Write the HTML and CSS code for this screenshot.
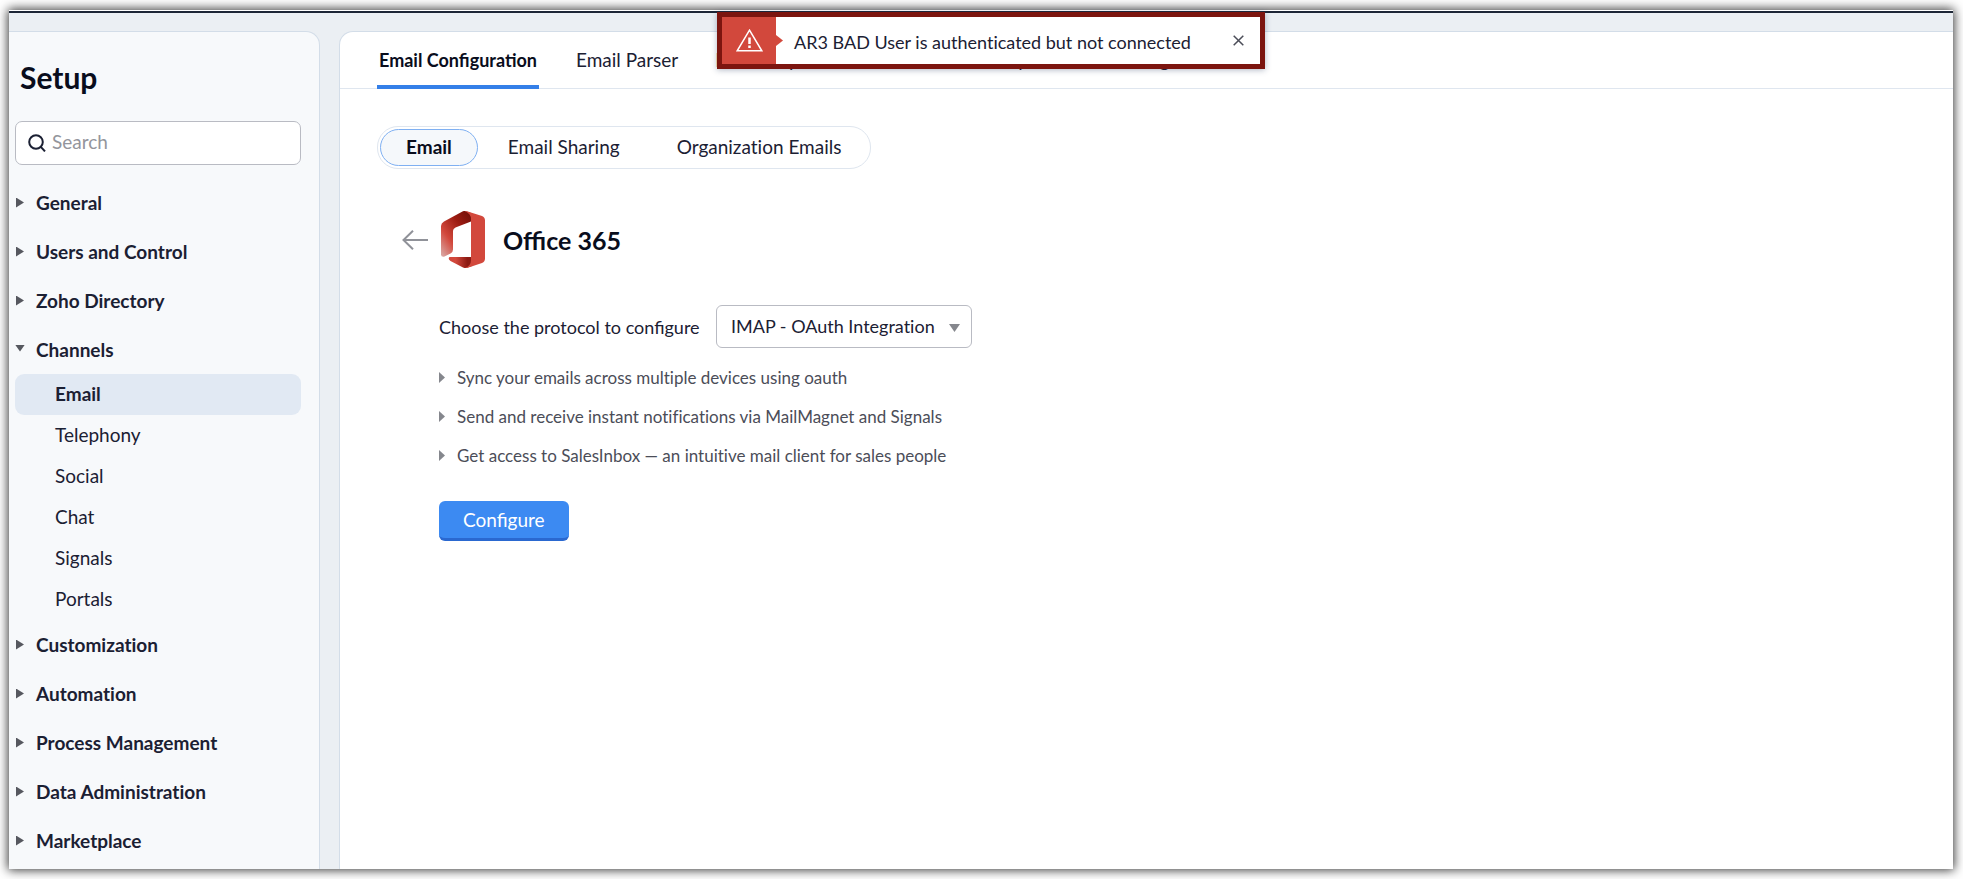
FILE: index.html
```html
<!DOCTYPE html>
<html lang="en">
<head>
<meta charset="utf-8">
<title>Setup - Email Configuration</title>
<link rel="stylesheet" href="styles.css">
</head>
<body>
<div class="window">
  <aside class="sidebar">
    <h1 class="sidebar-title">Setup</h1>
    <label class="search">
      <svg class="search-icon" viewBox="0 0 18 18" aria-hidden="true"><circle cx="8" cy="8" r="6.8"/><path d="M12.8 12.8L17 17.4"/></svg>
      <input class="search-input" type="search" placeholder="Search" aria-label="Search">
    </label>
    <nav class="menu" aria-label="Setup">
      <button class="group" type="button"><span class="caret"></span>General</button>
      <button class="group" type="button"><span class="caret"></span>Users and Control</button>
      <button class="group" type="button"><span class="caret"></span>Zoho Directory</button>
      <button class="group" type="button" aria-expanded="true"><span class="caret caret-open"></span>Channels</button>
      <div class="children">
        <a class="item item-active" href="#">Email</a>
        <a class="item" href="#">Telephony</a>
        <a class="item" href="#">Social</a>
        <a class="item" href="#">Chat</a>
        <a class="item" href="#">Signals</a>
        <a class="item" href="#">Portals</a>
      </div>
      <button class="group" type="button"><span class="caret"></span>Customization</button>
      <button class="group" type="button"><span class="caret"></span>Automation</button>
      <button class="group" type="button"><span class="caret"></span>Process Management</button>
      <button class="group" type="button"><span class="caret"></span>Data Administration</button>
      <button class="group" type="button"><span class="caret"></span>Marketplace</button>
    </nav>
  </aside>
  <main class="main">
    <nav class="tabs" aria-label="Email settings">
      <a class="tab tab-active" href="#">Email Configuration</a>
      <a class="tab" href="#">Email Parser</a>
      <a class="tab" href="#">BCC Dropbox</a>
      <a class="tab" href="#">Email Deliverability</a>
      <a class="tab" href="#">Email Intelligence</a>
    </nav>
    <div class="content">
      <div class="pills">
        <button class="pill pill-active" type="button">Email</button>
        <button class="pill" type="button">Email Sharing</button>
        <button class="pill" type="button">Organization Emails</button>
      </div>
      <header class="provider">
        <button class="back" type="button" aria-label="Back">
          <svg class="back-icon" viewBox="0 0 26 20" aria-hidden="true"><path d="M26 10H1.5M11 .8L1.5 10l9.500 9.200"/></svg>
        </button>
        <svg class="logo" viewBox="0 0 44 57" aria-hidden="true">
          <defs>
            <linearGradient id="side" x1="1" y1="0" x2="0.1" y2="1"><stop offset="0" stop-color="#6d0f08"/><stop offset=".35" stop-color="#9c1c12"/><stop offset=".7" stop-color="#d2483c"/><stop offset="1" stop-color="#d9a09c"/></linearGradient>
            <linearGradient id="foot" x1="0" y1="0" x2="1" y2="0"><stop offset="0" stop-color="#d2483c"/><stop offset=".3" stop-color="#d2483c"/><stop offset=".8" stop-color="#8c1a12"/><stop offset="1" stop-color="#8c1a12"/></linearGradient>
          </defs>
          <path fill="url(#side)" d="M24 0q-1.500-.2-3 .7L3 10.500Q0 12.200 0 15v28.500q0 2.500 3 2.200l6.500-3.200q2.500-1.300 2.500-4V20q0-2.500 2.500-3.500L30 10.500V2z"/>
          <path fill="url(#foot)" d="M30 46H8.500q-2 2 1 4L22 56.500q2 1 4 .2L31 55z"/>
          <path fill="#d2483c" d="M24 0l2 .2L41 5q3 1.200 3 4.500v38q0 3.300-3 4.500L26 57q-1 .2-2 0 6-2 6-8V8q0-5-6-8z"/>
        </svg>
        <h2 class="provider-name">Office 365</h2>
      </header>
      <section class="setup">
        <div class="protocol">
          <label for="protocol">Choose the protocol to configure</label>
          <select class="select" id="protocol"><option>IMAP - OAuth Integration</option></select>
        </div>
        <ul class="features">
          <li class="feature">Sync your emails across multiple devices using oauth</li>
          <li class="feature">Send and receive instant notifications via MailMagnet and Signals</li>
          <li class="feature">Get access to SalesInbox — an intuitive mail client for sales people</li>
        </ul>
        <button class="configure" type="button">Configure</button>
      </section>
    </div>
  </main>
  <div class="toast" role="alert">
    <span class="toast-mark">
      <svg class="toast-icon" viewBox="0 0 27 23" aria-hidden="true"><path d="M13.500 1.200L25.800 21.800H1.200z"/><path stroke-width="2.500" d="M13.500 8.500v6.500M13.500 16.500v2.500"/></svg>
    </span>
    <span class="toast-text">AR3 BAD User is authenticated but not connected</span>
    <button class="toast-close" type="button" aria-label="Close">
      <svg class="close-icon" viewBox="0 0 11 11" aria-hidden="true"><path d="M.7.7l9.600 9.600M10.300.7L.7 10.300"/></svg>
    </button>
  </div>
</div>
</body>
</html>
```
FILE: styles.css
```css
* { box-sizing: border-box; }

body {
  margin: 0;
  height: 100vh;
  padding: 10px 10px 10px 9px;
  background: #fff;
  color: #1b2033;
  font: 19px/24px Lato, "Open Sans", sans-serif;
}

button, input, select { font: inherit; color: inherit; }
button { border: 0; padding: 0; background: none; cursor: pointer; }
a { color: inherit; text-decoration: none; }

.window {
  position: relative;
  display: flex;
  gap: 19px;
  height: 100%;
  padding-top: 20px;
  border-top: 1px solid #fff;
  background: #ebeff3;
  box-shadow: 0 0 10px 1px rgba(0, 0, 0, 0.8), inset 0 2px #1d2636;
}

.sidebar {
  flex: none;
  width: 311px;
  padding: 28px 18px 0 6px;
  overflow: hidden;
  border: 1px solid #d3dde8;
  border-width: 1px 1px 0 0;
  border-radius: 0 14px 0 0;
  background: #f7f9fb;
}

.sidebar-title {
  margin: 0 0 27px 5px;
  color: #090d1c;
  font-size: 30px;
  line-height: 34px;
}

.search {
  display: flex;
  align-items: center;
  gap: 6px;
  height: 44px;
  margin-bottom: 13px;
  padding: 0 12px 1px;
  border: 1px solid #b9bbc3;
  border-radius: 7px;
  background: #fff;
}

.search-icon { flex: none; width: 18px; height: 18px; fill: none; stroke: #1b2033; stroke-width: 2; }
.search-input { flex: 1; min-width: 0; padding: 0 0 2px; border: 0; outline: 0; background: none; }
.search-input::placeholder { color: #93959c; opacity: 1; }

.menu {
  display: flex;
  flex-direction: column;
  font-variant-ligatures: none;
}

.group {
  display: flex;
  align-items: center;
  height: 49px;
  font-weight: 700;
  text-align: left;
}

.caret {
  width: 21px;
  height: 10px;
}

.caret::before {
  content: "";
  display: block;
  width: 8px;
  height: 10px;
  margin-left: 1px;
  background: #56585f;
  clip-path: polygon(0 0, 100% 50%, 0 100%);
}

.caret-open::before {
  width: 10px;
  height: 7px;
  margin-left: 0;
  clip-path: polygon(0 0, 100% 0, 50% 100%);
}

.item {
  display: flex;
  align-items: center;
  height: 41px;
  padding: 0 0 2px 40px;
  border-radius: 9px;
}

.item-active { background: #e1e9f3; font-weight: 700; }

.main {
  flex: 1;
  min-width: 0;
  border: 1px solid #d3dde8;
  border-width: 1px 0 0 1px;
  border-radius: 14px 0 0 0;
  background: #fff;
}

.tabs {
  display: flex;
  gap: 37px;
  height: 57px;
  padding-left: 37px;
  border-bottom: 1px solid #dfe6ef;
}

.tab {
  display: flex;
  align-items: center;
  height: 57px;
  padding-top: 2px;
  border-bottom: 4px solid transparent;
}

.tab-active {
  padding: 2px 2px 0;
  border-radius: 3px 3px 0 0;
  background: linear-gradient(#347fe8, #347fe8) bottom / 100% 4px no-repeat border-box;
  color: #090d1c;
  font-size: 18px;
  font-weight: 700;
}

.content {
  display: flex;
  flex-direction: column;
  align-items: flex-start;
  padding: 37px;
}

.pills {
  display: flex;
  gap: 3px;
  padding: 2px;
  border: 1px solid #dfe6ef;
  border-radius: 21px;
  font-variant-ligatures: none;
}

.pill {
  height: 37px;
  padding: 0 26px 2px;
  border: 1px solid transparent;
  border-radius: 19px;
}

.pill-active {
  padding: 0 25px 2px;
  border-color: #7fb0f2;
  background: #f5f8fb;
  color: #090d1c;
  font-weight: 700;
}

.provider {
  display: flex;
  align-items: center;
  margin: 42px 0 37px 25px;
}

.back { display: flex; margin-right: 13px; }
.back-icon { width: 26px; height: 20px; fill: none; stroke: #909299; stroke-width: 2; }
.logo { width: 44px; height: 57px; }

.provider-name {
  margin: 0 0 0 18px;
  color: #090d1c;
  font-size: 25px;
  line-height: 30px;
}

.setup { padding-left: 62px; }

.protocol {
  position: relative;
  display: grid;
  grid-template-columns: 266px 256px;
  align-items: center;
  gap: 11px;
  font-size: 18px;
}

.select {
  appearance: none;
  height: 43px;
  padding: 0 32px 2px 14px;
  border: 1px solid #b9bbc3;
  border-radius: 6px;
  background: #fff;
  font-variant-ligatures: none;
}

.protocol::after {
  content: "";
  position: absolute;
  top: 19px;
  right: 12px;
  width: 11px;
  height: 8px;
  background: #85878d;
  clip-path: polygon(0 0, 100% 0, 50% 100%);
  pointer-events: none;
}

.features {
  margin: 10px 0 26px;
  padding: 0;
  color: #4b4d58;
  font-size: 17px;
  font-variant-ligatures: none;
  list-style: none;
}

.feature {
  display: flex;
  align-items: center;
  gap: 12px;
  height: 39px;
}

.feature::before {
  content: "";
  width: 6px;
  height: 11px;
  background: #85878d;
  clip-path: polygon(0 0, 100% 50%, 0 100%);
}

.configure {
  height: 40px;
  padding: 0 24px;
  border-bottom: 3px solid #2a68d0;
  border-radius: 6px;
  background: #3c8af2;
  color: #fff;
}

.toast {
  position: absolute;
  top: 1px;
  left: 50%;
  display: flex;
  align-items: center;
  width: 548px;
  height: 57px;
  margin-left: -264px;
  border: 5px solid #7c150f;
  background: #fff;
  box-shadow: 0 1px 6px rgba(30, 50, 90, 0.35);
  font-size: 18px;
  font-variant-ligatures: none;
}

.toast-mark {
  position: relative;
  display: grid;
  place-items: center;
  width: 54px;
  height: 100%;
  background: #d2483c;
}

.toast-mark::after {
  content: "";
  position: absolute;
  top: 18px;
  left: 100%;
  width: 7px;
  height: 11px;
  background: #d2483c;
  clip-path: polygon(0 0, 100% 50%, 0 100%);
}

.toast-icon { width: 27px; height: 23px; fill: none; stroke: #fff; stroke-width: 1.5; }
.toast-text { flex: 1; padding: 2px 0 0 18px; color: #1b2033; }
.toast-close { display: flex; margin-right: 16px; }
.close-icon { width: 11px; height: 11px; fill: none; stroke: #4b4d58; stroke-width: 1.5; }
```
